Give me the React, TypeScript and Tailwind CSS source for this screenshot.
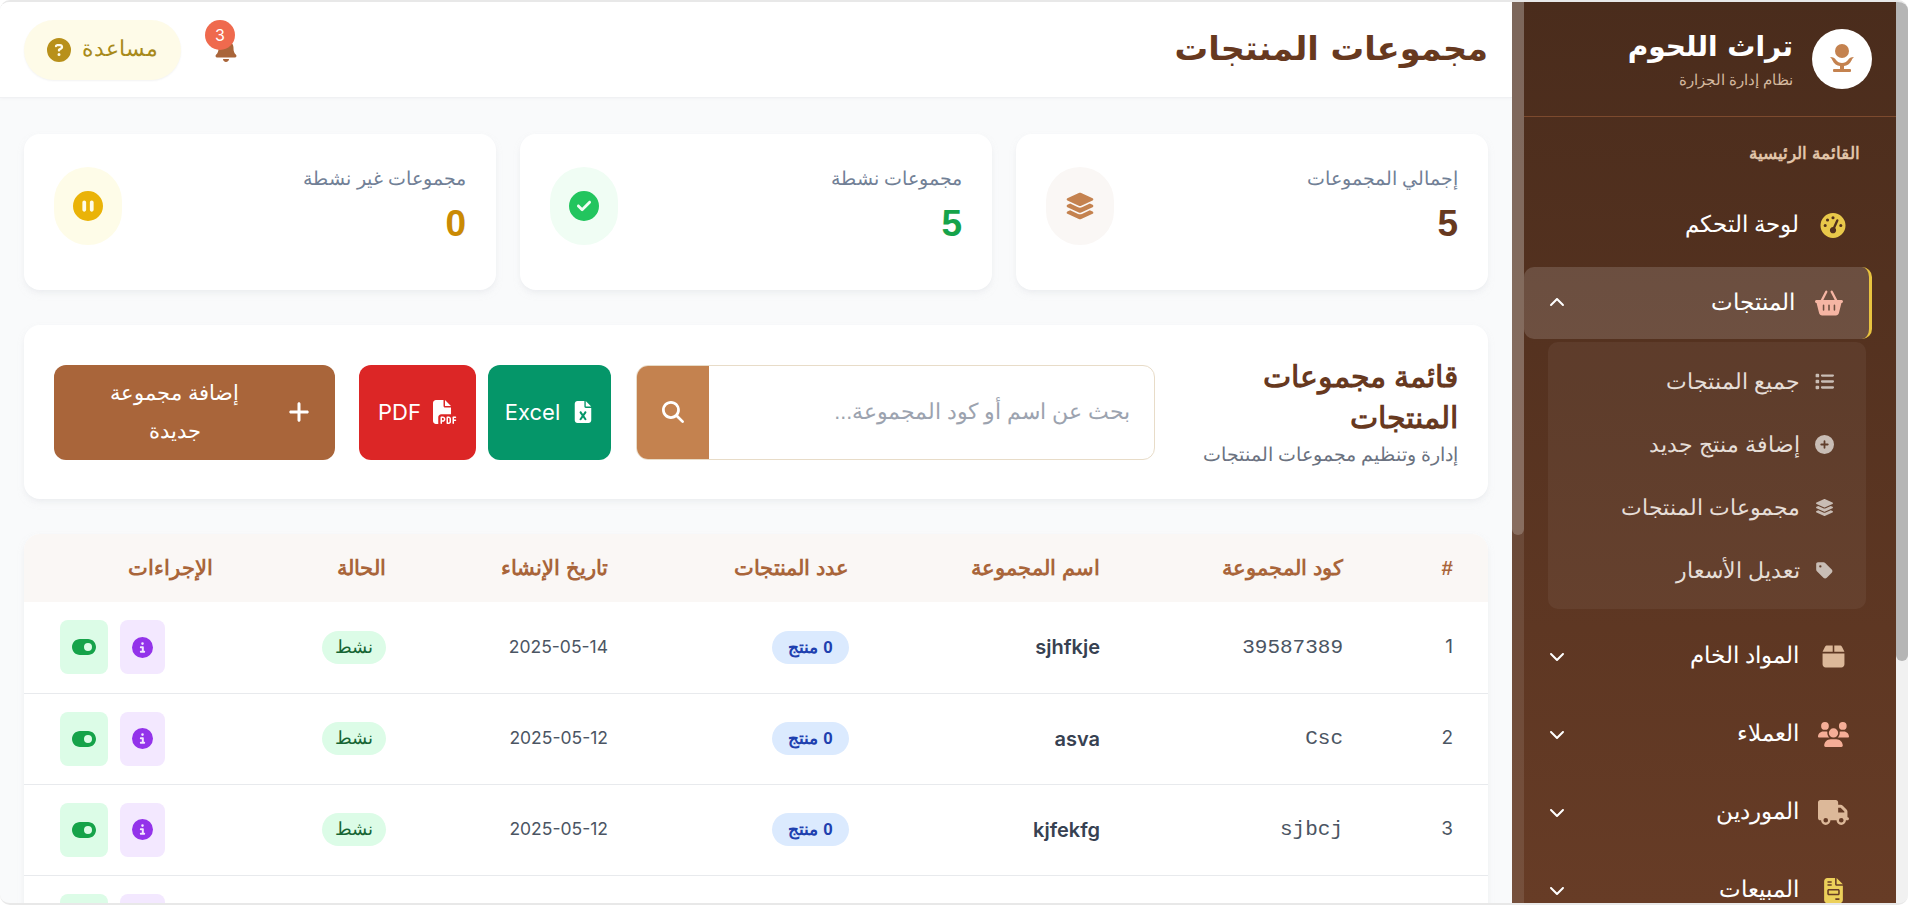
import React from "react";
import {
  FaBasketShopping,
  FaBell,
  FaBox,
  FaChevronDown,
  FaChevronUp,
  FaCircleCheck,
  FaCircleInfo,
  FaCirclePause,
  FaCirclePlus,
  FaCircleQuestion,
  FaFileExcel,
  FaFileInvoice,
  FaFilePdf,
  FaGaugeHigh,
  FaLayerGroup,
  FaList,
  FaMagnifyingGlass,
  FaPlus,
  FaTag,
  FaToggleOn,
  FaTruck,
  FaUsers,
} from "react-icons/fa6";

const rows = [
  { id: 1, code: "39587389", name: "sjhfkje", date: "2025-05-14" },
  { id: 2, code: "Csc", name: "asva", date: "2025-05-12" },
  { id: 3, code: "sjbcj", name: "kjfekfg", date: "2025-05-12" },
  { id: 4, code: "", name: "", date: "" },
];

const subItems = [
  { label: "جميع المنتجات", icon: <FaList /> },
  { label: "إضافة منتج جديد", icon: <FaCirclePlus /> },
  { label: "مجموعات المنتجات", icon: <FaLayerGroup /> },
  { label: "تعديل الأسعار", icon: <FaTag /> },
];

const menuItems = [
  { label: "المواد الخام", icon: <FaBox />, color: "text-[25px] text-[#dcb899]" },
  { label: "العملاء", icon: <FaUsers />, color: "text-[31px] text-[#f5ae97]" },
  { label: "الموردين", icon: <FaTruck />, color: "text-[31px] text-[#dcb899]" },
  { label: "المبيعات", icon: <FaFileInvoice />, color: "text-[25px] text-[#ecd05a]" },
];

const LogoMark = () => (
  <svg viewBox="0 0 32 32" className="h-[32px] w-[32px]" fill="#c4824f">
    <circle cx="16" cy="8" r="7" />
    <path d="M4 14c3 0 5 1 6 3 1.500 2 3.500 3 6 3s4.500-1 6-3c1-2 3-3 6-3-1 1-2 2-2.500 3.500-1.500 3.500-4.500 5-7.500 5.500v3h-4v-3c-3-.5-6-2-7.500-5.500C6 16 5 15 4 14z" />
    <rect x="7" y="26" width="18" height="3" rx="1" />
  </svg>
);

const StatCard = ({
  label,
  value,
  valueColor,
  circle,
  icon,
}: {
  label: string;
  value: string;
  valueColor: string;
  circle: string;
  icon: React.ReactNode;
}) => (
  <div className="flex h-[156px] items-start justify-between rounded-2xl bg-white pt-[33px] pr-[30px] pl-[30px] shadow-md shadow-gray-200/50">
    <div>
      <p className="text-[19px] leading-[24px] text-[#718096]">{label}</p>
      <p className={`mt-[10px] font-['Liberation_Sans'] text-[37px] leading-[46px] font-bold ${valueColor}`}>
        {value}
      </p>
    </div>
    <div className={`flex h-[78px] w-[68px] items-center justify-center rounded-full text-[30px] ${circle}`}>
      {icon}
    </div>
  </div>
);

const SideItem = ({ label, icon, color }: { label: string; icon: React.ReactNode; color: string }) => (
  <div className="flex h-[72px] items-center justify-between pr-[46px] pl-[25px] text-white">
    <div className="flex items-center">
      <span className={`flex w-[34px] justify-center ${color}`}>{icon}</span>
      <span className="mr-[17px] text-[22.5px] font-medium">{label}</span>
    </div>
    <FaChevronDown className="text-[16px]" />
  </div>
);

export default function App() {
  return (
    <div dir="rtl" className="h-screen overflow-hidden bg-white pb-[2px] pl-0 pr-[5px] font-['Liberation_Sans',sans-serif]">
      <div className="flex h-full overflow-hidden rounded-[10px] border-t-2 border-b-2 border-[#e8e8e8] bg-[#f9fafb]">
        {/* page scrollbar */}
        <div className="w-[12px] shrink-0 bg-[#f1f1f1]">
          <div className="h-[659px] rounded-b-[6px] bg-[#b5b5b5]" />
        </div>

        {/* sidebar */}
        <aside className="flex w-[384px] shrink-0 bg-gradient-to-b from-[#4a2c1c] to-[#673c26]">
          <div className="min-w-0 flex-1">
            <div className="flex h-[115px] items-center border-b border-[#7d4a2e] pr-[24px]">
              <div className="flex h-[60px] w-[60px] items-center justify-center rounded-full bg-white">
                <LogoMark />
              </div>
              <div className="mr-[19px]">
                <p className="font-['DejaVu_Sans'] text-[28px] leading-[38px] font-bold text-white">تراث اللحوم</p>
                <p className="mt-[4px] text-[15px] leading-[20px] text-[#d4b99f]">نظام إدارة الجزارة</p>
              </div>
            </div>
            <p className="mt-[24px] pr-[36px] text-[16.5px] leading-[24px] font-semibold text-[#e1c4a8]">القائمة الرئيسية</p>
            <div className="mt-[24px] flex h-[72px] items-center pr-[46px] text-white">
              <FaGaugeHigh className="w-[34px] text-[25px] text-[#e8c84a]" />
              <span className="mr-[17px] text-[22.5px] font-medium">لوحة التحكم</span>
            </div>
            <div className="mt-[6px] mr-[24px] flex h-[72px] items-center justify-between rounded-[10px] border-r-[3px] border-[#e8c33f] bg-white/15 pr-[23px] pl-[25px] text-white">
              <div className="flex items-center">
                <span className="flex w-[34px] justify-center text-[28px] text-[#f5b5a3]">
                  <FaBasketShopping />
                </span>
                <span className="mr-[17px] text-[22.5px] font-medium">المنتجات</span>
              </div>
              <FaChevronUp className="text-[16px]" />
            </div>
            <div className="mt-[3px] mr-[30px] ml-[24px] rounded-[10px] bg-white/5 py-[7.5px]">
              {subItems.map((item) => (
                <div key={item.label} className="flex h-[63px] items-center pr-[32px] text-[#e6ded8]">
                  <span className="flex w-[20px] justify-center text-[19px] text-[#c9bdb5]">{item.icon}</span>
                  <span className="mr-[14px] text-[22px]">{item.label}</span>
                </div>
              ))}
            </div>
            <div className="mt-[11px] flex flex-col gap-[6px]">
              {menuItems.map((item) => (
                <SideItem key={item.label} {...item} />
              ))}
            </div>
          </div>
          <div className="w-[12px] shrink-0 bg-white/10">
            <div className="h-[533px] rounded-b-[6px] bg-white/20" />
          </div>
        </aside>

        {/* main */}
        <main className="min-w-0 flex-1 overflow-hidden">
          <header className="flex h-[96px] items-center justify-between border-b border-[#f0f1f3] bg-white pr-[24px] pl-[24px] shadow-sm shadow-gray-100">
            <h1 className="font-['DejaVu_Sans'] text-[33.5px] font-bold text-[#67391f]">مجموعات المنتجات</h1>
            <div className="flex items-center gap-[33px]">
              <div className="relative text-[24px] text-[#a9653a]">
                <FaBell />
                <span className="absolute -top-[18px] right-[3px] flex h-[30px] w-[30px] items-center justify-center rounded-full bg-[#ef6a4e] font-['Inter'] text-[16px] text-white">
                  3
                </span>
              </div>
              <div className="flex h-[60px] w-[157px] items-center justify-center gap-[11px] rounded-full bg-[#fefbe8] text-[#a88a1a] shadow-xs">
                <span className="text-[21.5px]">مساعدة</span>
                <FaCircleQuestion className="text-[24px] text-[#b8901a]" />
              </div>
            </div>
          </header>

          <div className="px-[24px] pt-[36px]">
            <div className="grid grid-cols-3 gap-[24px]">
              <StatCard label="إجمالي المجموعات" value="5" valueColor="text-[#67391f]" circle="bg-[#faf7f5] text-[#c4824f]" icon={<FaLayerGroup />} />
              <StatCard label="مجموعات نشطة" value="5" valueColor="text-[#16a34a]" circle="bg-[#f0fdf4] text-[#22c55e]" icon={<FaCircleCheck />} />
              <StatCard label="مجموعات غير نشطة" value="0" valueColor="text-[#ca8a04]" circle="bg-[#fefce8] text-[#eab308]" icon={<FaCirclePause />} />
            </div>

            <div className="mt-[35px] flex h-[174px] items-center rounded-2xl bg-white pr-[30px] pl-[30px] shadow-md shadow-gray-200/50">
              <div className="w-[254px] shrink-0">
                <h2 className="text-[29.5px] leading-[41px] font-bold text-[#67391f]">قائمة مجموعات المنتجات</h2>
                <p className="mt-[4px] text-[18.5px] leading-[26px] whitespace-nowrap text-[#6b7280]">إدارة وتنظيم مجموعات المنتجات</p>
              </div>
              <div className="mr-[49px] flex h-[95px] w-[519px] overflow-hidden rounded-xl border border-[#e8dcc8]">
                <div className="flex flex-1 items-center pr-[24px] text-[21.5px] text-[#9ca3af]">بحث عن اسم أو كود المجموعة...</div>
                <div className="flex w-[72px] items-center justify-center bg-[#c4824f] text-[22px] text-white">
                  <FaMagnifyingGlass />
                </div>
              </div>
              <div className="mr-[25px] flex h-[95px] w-[123px] items-center justify-center gap-[12px] rounded-xl bg-[#059669] text-white">
                <FaFileExcel className="text-[22px]" />
                <span className="font-['Inter'] text-[22px]">Excel</span>
              </div>
              <div className="mr-[12px] flex h-[95px] w-[117px] items-center justify-center gap-[12px] rounded-xl bg-[#dc2626] text-white">
                <FaFilePdf className="text-[24px]" />
                <span className="font-['Inter'] text-[22px]">PDF</span>
              </div>
              <div className="mr-[24px] flex h-[95px] w-[281px] items-center rounded-xl bg-[#a9653a] pr-[24px] pl-[24px] text-white">
                <FaPlus className="shrink-0 text-[24px]" />
                <span className="mr-[16px] flex-1 px-[20px] text-center text-[21px] leading-[38px]">إضافة مجموعة جديدة</span>
              </div>
            </div>

            <div className="mt-[35px] overflow-hidden rounded-t-2xl bg-white shadow-md shadow-gray-200/50">
              <table className="w-full table-fixed border-collapse">
                <colgroup>
                  <col className="w-[110px]" />
                  <col className="w-[243px]" />
                  <col className="w-[251px]" />
                  <col className="w-[241px]" />
                  <col className="w-[222px]" />
                  <col className="w-[173px]" />
                  <col />
                </colgroup>
                <thead>
                  <tr className="h-[68px] bg-[#faf7f5] text-right text-[20.5px] font-bold text-[#a9653a]">
                    {["#", "كود المجموعة", "اسم المجموعة", "عدد المنتجات", "تاريخ الإنشاء", "الحالة", "الإجراءات"].map((title) => (
                      <th key={title} className="pr-[35px] font-bold">
                        {title}
                      </th>
                    ))}
                  </tr>
                </thead>
                <tbody>
                  {rows.map((row) => (
                    <tr key={row.id} className="h-[91px] border-b border-[#e8eaed] text-right">
                      <td className="pr-[35px] font-['Inter'] text-[19px] text-[#4b5563]">{row.id <= 3 ? row.id : ""}</td>
                      <td className="pr-[35px] font-['Liberation_Mono'] text-[21px] text-[#4b5563]">{row.code}</td>
                      <td className="pr-[35px] font-['Inter'] text-[20px] font-semibold text-[#374151]">{row.name}</td>
                      <td className="pr-[35px]">
                        {row.id <= 3 && (
                          <span className="inline-flex h-[33px] w-[77px] items-center justify-center rounded-full bg-[#dbeafe] text-[17px] font-bold text-[#1e40af]">
                            0 منتج
                          </span>
                        )}
                      </td>
                      <td className="pr-[35px] font-['Inter'] text-[17.5px] text-[#4b5563]">{row.date}</td>
                      <td className="pr-[35px]">
                        {row.id <= 3 && (
                          <span className="inline-flex h-[33px] w-[64px] items-center justify-center rounded-full bg-[#dcfce7] text-[18px] text-[#166534]">
                            نشط
                          </span>
                        )}
                      </td>
                      <td className="pl-[36px] align-top">
                        <div className="mt-[18px] flex justify-end gap-[12px]">
                          <div className="flex h-[54px] w-[45px] items-center justify-center rounded-lg bg-[#f3e8ff] text-[21px] text-[#9333ea]">
                            <FaCircleInfo />
                          </div>
                          <div className="flex h-[54px] w-[48px] items-center justify-center rounded-lg bg-[#dcfce7] text-[24px] text-[#16a34a]">
                            <FaToggleOn />
                          </div>
                        </div>
                      </td>
                    </tr>
                  ))}
                </tbody>
              </table>
            </div>
          </div>
        </main>
      </div>
    </div>
  );
}
